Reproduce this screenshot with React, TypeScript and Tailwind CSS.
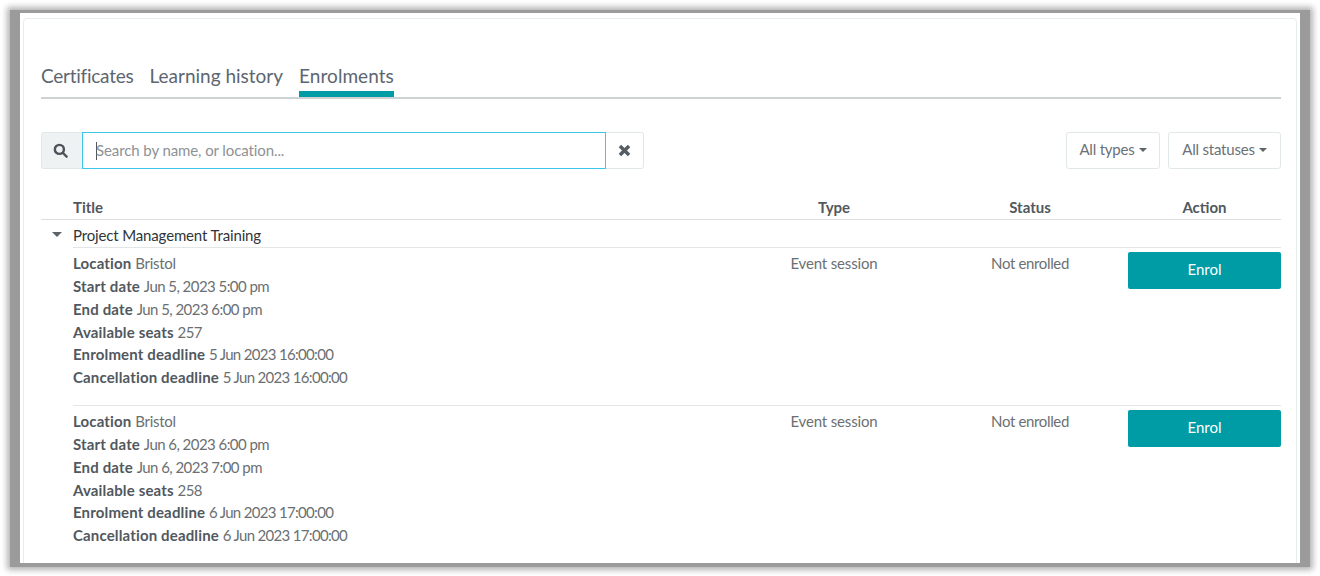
import React from "react";

const font = "[font-family:Lato,'Noto_Sans',sans-serif]";

function Row({ d1, d2, seats, dl, loc }: { d1: string; d2: string; seats: string; dl: string; loc: string }) {
  const lines: [string, string, string][] = [
    ["Location", loc, "tracking-[-0.3px]"],
    ["Start date", d1, "tracking-[-0.55px]"],
    ["End date", d2, "tracking-[-0.55px]"],
    ["Available seats", seats, "tracking-[-0.58px]"],
    ["Enrolment deadline", dl, "tracking-[-0.68px]"],
    ["Cancellation deadline", dl, "tracking-[-0.68px]"],
  ];
  return (
    <div className="ml-8 grid h-[158px] grid-cols-[1fr_196px_196px_153px] border-b border-[#e2e6e6] pt-[5px] text-[#6b6f72]">
      <div>
        {lines.map(([k, v, t]) => (
          <div key={k} className="h-[22.85px] leading-[21px]">
            <b className="font-bold tracking-[0.15px] text-[#51585e]">{k}</b> <span className={t}>{v}</span>
          </div>
        ))}
      </div>
      <div className="text-center leading-[21px] tracking-[-0.15px]">Event session</div>
      <div className="text-center leading-[21px] tracking-[-0.35px]">Not enrolled</div>
      <div className="-mt-px">
        <button className="block h-[37px] w-[153px] rounded-[2px] bg-[#009ca6] pb-[3px] text-[15px] text-white">Enrol</button>
      </div>
    </div>
  );
}

function Caret() {
  return <span className="ml-1 inline-block border-x-[4px] border-t-[4px] border-x-transparent border-t-[#5c6369] align-middle" />;
}

export default function App() {
  return (
    <div className={`h-[576px] w-[1320px] overflow-hidden bg-white pl-[10px] pt-[10px] text-[15px] ${font}`}>
      <div className="h-[557px] w-[1300px] overflow-hidden border-x-[10px] border-b-[4px] border-t-[3px] border-[#9b9b9b] bg-white shadow-[0_0_6px_3px_#b4b4b4]">
        <div className="ml-[3px] mt-[5px] h-[600px] w-[1274px] rounded-sm border border-[#e6eded] pl-[17px] pr-[15px] pt-[44px]">
          <div className="flex h-[36px] items-start gap-4 border-b-2 border-[#cfd2d3] text-[19px] text-[#5c6670]">
            <div className="h-[35px] leading-[26px] tracking-[-0.25px]">Certificates</div>
            <div className="h-[35px] leading-[26px]">Learning history</div>
            <div className="h-[34px] border-b-[6px] border-[#009ca6] leading-[26px] tracking-[0.05px]">Enrolments</div>
          </div>

          <div className="mt-[33px] flex items-stretch justify-between">
            <div className="flex h-[37px]">
              <div className="flex w-[41px] items-center justify-center rounded-l-[3px] border border-r-0 border-[#e2e8e8] bg-[#eef2f3]">
                <svg width="15" height="15" viewBox="0 0 16 16" fill="none" stroke="#4d5359" strokeWidth="2.6" className="-ml-[3px]">
                  <circle cx="6.8" cy="6.8" r="4.8" />
                  <path d="M10.4 10.4 14.5 14.5" strokeLinecap="round" />
                </svg>
              </div>
              <div className="flex w-[524px] items-center border border-[#3cc7e8] pl-[13px] tracking-[-0.1px] text-[#8d9296]">
                <span className="mr-[-1px] h-[18px] w-px bg-[#555]" />
                Search by name, or location...
              </div>
              <div className="flex w-[38px] items-center justify-center rounded-r-[3px] border border-l-0 border-[#e2e8e8]">
                <svg width="13" height="13" viewBox="0 0 12 12" stroke="#565d63" strokeWidth="3.2">
                  <path d="M1.8 1.8 10.2 10.2M10.2 1.8 1.8 10.2" />
                </svg>
              </div>
            </div>
            <div className="flex h-[37px] gap-2 text-[#6a7177]">
              <div className="flex w-[94px] items-center justify-center rounded-[3px] border border-[#e2e8e8] pb-[2px] tracking-[-0.2px]">
                All types<Caret />
              </div>
              <div className="flex w-[113px] items-center justify-center rounded-[3px] border border-[#e2e8e8] pb-[2px] tracking-[-0.2px]">
                All statuses<Caret />
              </div>
            </div>
          </div>

          <div className="mt-[27px] grid h-[24px] grid-cols-[1fr_196px_196px_153px] border-b border-[#dcdfe0] font-bold leading-[22px] text-[#51585e]">
            <div className="pl-8">Title</div>
            <div className="text-center">Type</div>
            <div className="text-center">Status</div>
            <div className="text-center">Action</div>
          </div>
          <div className="flex h-[28px] items-center">
            <span className="ml-[11px] w-[21px]">
              <span className="block h-0 w-0 border-x-[5px] border-t-[5px] border-x-transparent border-t-[#5c6369]" />
            </span>
            <span className="flex h-full flex-1 items-center border-b border-[#e2e6e6] pt-[4px] tracking-[-0.15px] text-[#2f353a]">Project Management Training</span>
          </div>
          <Row loc="Bristol" d1="Jun 5, 2023 5:00 pm" d2="Jun 5, 2023 6:00 pm" seats="257" dl="5 Jun 2023 16:00:00" />
          <Row loc="Bristol" d1="Jun 6, 2023 6:00 pm" d2="Jun 6, 2023 7:00 pm" seats="258" dl="6 Jun 2023 17:00:00" />
        </div>
      </div>
    </div>
  );
}
